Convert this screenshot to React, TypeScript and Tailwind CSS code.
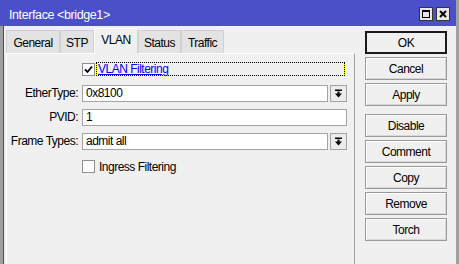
import React from 'react'

const font = { fontFamily: '"Liberation Sans", Arial, sans-serif', letterSpacing: '-0.5px' }

function DropArrow() {
  return (
    <svg width="9" height="9" viewBox="0 0 9 9">
      <rect x="1" y="0.5" width="7" height="1.5" fill="#000" />
      <rect x="3.5" y="2.5" width="2" height="2.5" fill="#000" />
      <polygon points="1,4.5 8,4.5 4.5,8.5" fill="#000" />
    </svg>
  )
}

function Check({ checked }: { checked?: boolean }) {
  return (
    <div className="w-[13px] h-[13px] bg-white border border-[#8e8f8f] flex items-center justify-center">
      {checked && (
        <svg width="9" height="9" viewBox="0 0 9 9">
          <path d="M1 4.5 L3.5 7 L8 1.5" stroke="#000" strokeWidth="1.8" fill="none" />
        </svg>
      )}
    </div>
  )
}

function Field({ value, drop }: { value: string; drop?: boolean }) {
  return (
    <div className="flex h-[17px] gap-[2px]">
      <div className="flex-1 bg-white border border-[#a3a3a3] text-[12px] leading-[15px] pl-[3px] text-black">{value}</div>
      {drop && (
        <div className="w-[17px] bg-[#ececec] border border-[#a3a3a3] flex items-center justify-center">
          <DropArrow />
        </div>
      )}
    </div>
  )
}

function Btn({ label, primary }: { label: string; primary?: boolean }) {
  return (
    <div
      className={
        'h-[23px] flex items-center justify-center text-[12px] text-black bg-[#f0f0f0] ' +
        (primary ? 'border-2 border-[#1a1a1a]' : 'border border-[#9a9a9a] shadow-[inset_1px_1px_0_#ffffff,inset_-1px_-1px_0_#d8d8d8]')
      }
    >
      {label}
    </div>
  )
}

const tabs = [
  { t: 'General', w: 'w-[54px]' },
  { t: 'STP', w: 'w-[34px]' },
  { t: 'VLAN', w: 'w-[44px]' },
  { t: 'Status', w: 'w-[43px]' },
  { t: 'Traffic', w: 'w-[43px]' },
]

export default function App() {
  return (
    <div className="w-[459px] h-[264px] flex flex-col bg-[#f0f0f0] overflow-hidden" style={font}>
      {/* title bar */}
      <div className="h-[26px] flex items-center bg-[#4b4fc8] pr-[6px] pt-[4px] border-r-[3px] border-[#a0a0a0]">
        <span className="pl-[9px] text-white text-[12.5px] flex-1 tracking-[-0.4px]">Interface &lt;bridge1&gt;</span>
        <div className="flex gap-[3px] pb-[2px]">
          <div className="w-[14px] h-[14px] bg-[#e8e8e8] border border-[#333] flex items-center justify-center">
            <div className="w-[8px] h-[8px] border border-black border-t-2" />
          </div>
          <div className="w-[14px] h-[14px] bg-[#e8e8e8] border border-[#333] flex items-center justify-center">
            <svg width="8" height="8" viewBox="0 0 8 8">
              <path d="M1 1 L7 7 M7 1 L1 7" stroke="#000" strokeWidth="2" />
            </svg>
          </div>
        </div>
      </div>

      <div className="flex-1 flex">
        <div className="w-[4px] bg-[#a0a0a0] border-r border-[#505050]" />

        {/* tabs + panel */}
        <div className="w-[351px] pl-[2px] pt-[1px] flex flex-col">
          <div className="flex h-[26px] items-end">
            {tabs.map(({ t, w }) =>
              t === 'VLAN' ? (
                <div key={t} className={w + ' h-[26px] bg-[#f0f0f0] border-t border-l border-r border-[#d9d9d9] border-t-white border-l-white text-[12px] flex items-center justify-center pb-[4px] -mb-[1px] relative z-10'}>
                  {t}
                </div>
              ) : (
                <div key={t} className={w + ' h-[23px] bg-[#e3e3e3] border-t border-l border-r border-[#d0d0d0] text-[12px] flex items-center justify-center pt-[1px]'}>
                  {t}
                </div>
              )
            )}
          </div>
          <div className="flex-1 border-t border-l border-white border-r border-r-[#a0a0a0] bg-[#f0f0f0] pt-[8px] pr-[7px]">
            <div className="flex flex-col">
              <div className="flex h-[14px] items-center">
                <div className="w-[75px]" />
                <Check checked />
                <div className="ml-[1px] flex-1 mr-[2px] h-[14px] bg-[#ffff00] border border-dotted border-black">
                  <div className="w-full h-full bg-[#f0f0f0] text-[12px] leading-[12px] pl-[1px] text-[#0000ff] underline">VLAN Filtering</div>
                </div>
              </div>
              {[
                { l: 'EtherType:', v: '0x8100', d: true },
                { l: 'PVID:', v: '1', d: false },
                { l: 'Frame Types:', v: 'admit all', d: true },
              ].map((r, i) => (
                <div key={r.l} className={'flex items-center ' + (i === 0 ? 'mt-[8px]' : 'mt-[6px]')}>
                  <div className="w-[71px] text-right text-[12px] text-black mr-[4px] whitespace-nowrap">{r.l}</div>
                  <div className="flex-1">
                    <Field value={r.v} drop={r.d} />
                  </div>
                </div>
              ))}
              <div className="flex h-[13px] items-center mt-[10px]">
                <div className="w-[75px]" />
                <Check />
                <span className="ml-[4px] text-[12px] text-black">Ingress Filtering</span>
              </div>
            </div>
          </div>
        </div>

        {/* buttons */}
        <div className="flex-1 flex flex-col pl-[10px] pr-[9px] pt-[5px]">
          <div className="flex flex-col gap-[3px]">
            <Btn label="OK" primary />
            <Btn label="Cancel" />
            <Btn label="Apply" />
          </div>
          <div className="flex flex-col gap-[3px] mt-[8px]">
            <Btn label="Disable" />
            <Btn label="Comment" />
            <Btn label="Copy" />
            <Btn label="Remove" />
            <Btn label="Torch" />
          </div>
        </div>
        <div className="w-[3px] bg-[#a0a0a0]" />
      </div>
    </div>
  )
}
